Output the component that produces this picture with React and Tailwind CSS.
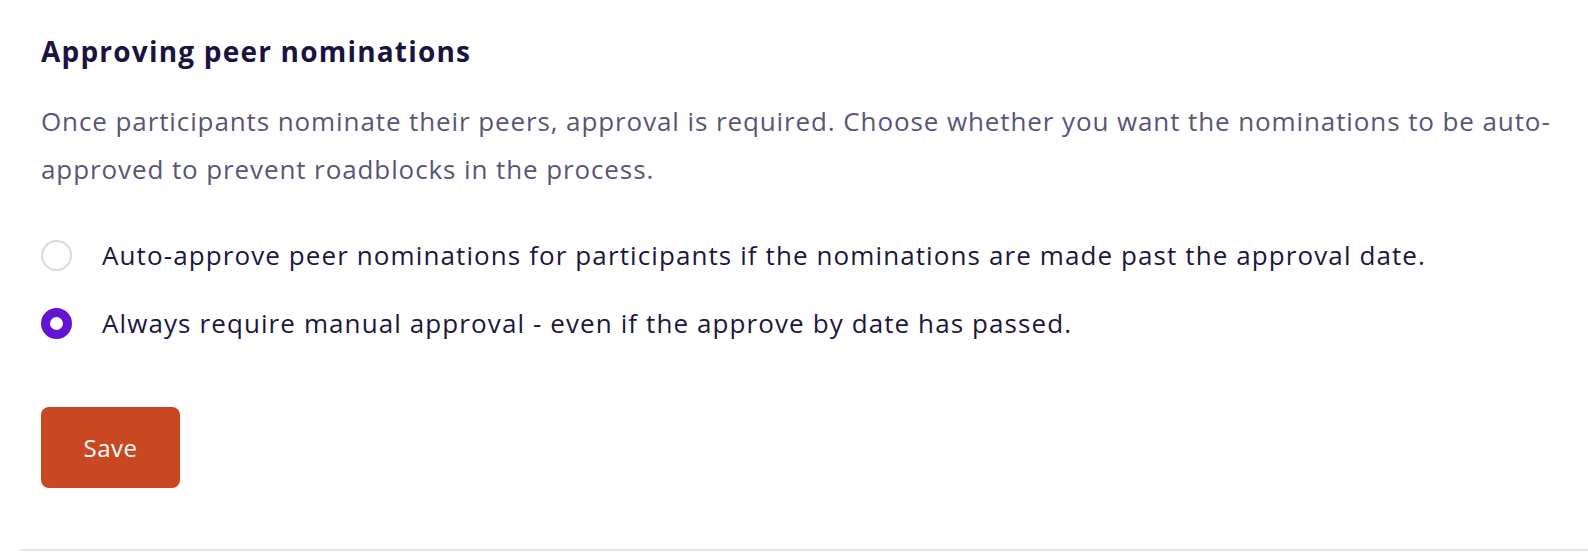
import { useState } from 'react'

const options = [
  { id: 'auto', label: 'Auto-approve peer nominations for participants if the nominations are made past the approval date.' },
  { id: 'manual', label: 'Always require manual approval - even if the approve by date has passed.' },
]

export default function App() {
  const [selected, setSelected] = useState('manual')

  return (
    <div className="bg-white min-h-[554px] font-['Open_Sans',sans-serif]">
      <div className="pl-[41px] pt-[33px]">
        <h2 className="text-[28px] leading-[36px] font-bold tracking-[1.2px] text-[#1b1340]">Approving peer nominations</h2>
        <p className="mt-[28px] max-w-[1535px] text-[26px] leading-[48px] tracking-[0.9px] text-[#5a5578]">
          Once participants nominate their peers, approval is required. Choose whether you want the nominations to be auto-approved to prevent roadblocks in the process.
        </p>

        <div className="mt-[46px] flex flex-col gap-[36px]">
          {options.map((opt) => (
            <label key={opt.id} className="flex items-center gap-[30px] cursor-pointer" onClick={() => setSelected(opt.id)}>
              <span
                className={`w-[31px] h-[31px] rounded-full shrink-0 ${
                  selected === opt.id ? 'border-[9px] border-[#6314d3] bg-white' : 'border-2 border-[#dadada] bg-white'
                }`}
              />
              <span className="text-[26px] leading-[32px] tracking-[1.1px] text-[#1d1640]">{opt.label}</span>
            </label>
          ))}
        </div>

        <button className="mt-[68px] w-[139px] h-[81px] rounded-lg bg-[#c94821] text-white text-[24px] tracking-[0.5px]">
          Save
        </button>
      </div>

      <div className="mt-[61px] ml-[20px] h-[2px] bg-[#e5e5e5]" />
    </div>
  )
}
